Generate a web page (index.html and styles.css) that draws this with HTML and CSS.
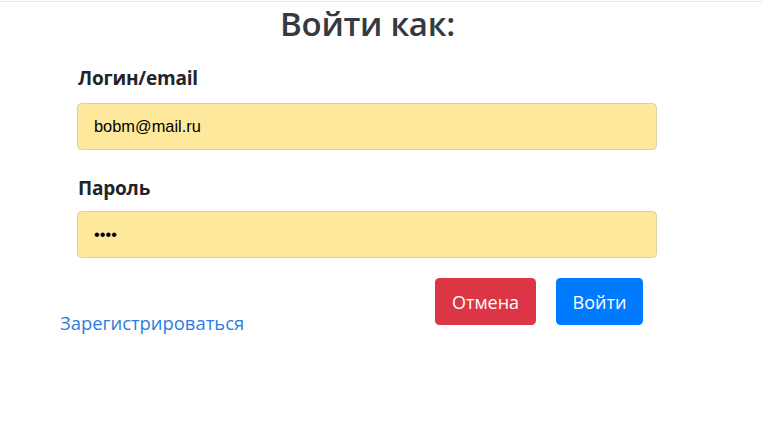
FILE: index.html
```html
<!DOCTYPE html>
<html lang="ru">
<head>
<meta charset="utf-8">
<title>Войти</title>
<link rel="stylesheet" href="styles.css">
</head>
<body>
<div class="topline"></div>
<main class="page">
  <h1 class="title">Войти как:</h1>
  <form class="form">
    <div class="group">
      <label class="label" for="login">Логин/email</label>
      <input class="field" id="login" type="text" value="bobm@mail.ru">
    </div>
    <div class="group group-next">
      <label class="label" for="pass">Пароль</label>
      <input class="field" id="pass" type="password" value="abcd">
    </div>
  </form>
  <div class="actions">
    <a class="link" href="#">Зарегистрироваться</a>
    <div class="buttons">
      <button class="btn btn-danger" type="button">Отмена</button>
      <button class="btn btn-primary" type="button">Войти</button>
    </div>
  </div>
</main>
</body>
</html>
```
FILE: styles.css
```css
* { box-sizing: border-box; }
html, body { margin: 0; padding: 0; background: #fff; }
body {
  font-family: "Open Sans", "Noto Sans", sans-serif;
  color: #212529;
  width: 762px;
  height: 433px;
  overflow: hidden;
}
.topline {
  margin-top: 1px;
  border-top: 1px solid #e6e6e6;
}
.page {
  width: 735px;
}
.title {
  margin: 0;
  text-align: center;
  font-weight: 600;
  font-size: 33px;
  line-height: 44px;
  color: #343a40;
  letter-spacing: -0.3px;
}
.form {
  margin: 0 0 0 77px;
  width: 580px;
}
.group {
  display: flex;
  flex-direction: column;
}
.label {
  font-weight: 700;
  font-size: 19px;
  line-height: 30px;
  padding: 17px 1px 10px;
  letter-spacing: -0.2px;
}
.group-next .label { padding-top: 23px; padding-bottom: 8px; }
.field {
  height: 47px;
  width: 100%;
  margin: 0;
  padding: 0 16px;
  border: 1px solid #d9d2a8;
  border-radius: 4.5px;
  background: #fee89b;
  font-family: "Liberation Sans", Arial, sans-serif;
  font-size: 16.4px;
  color: #000;
  outline: none;
}
.actions {
  display: flex;
  justify-content: space-between;
  align-items: flex-start;
  margin: 20px 0 0 60px;
  width: 583px;
}
.link {
  margin-top: 33px;
  font-size: 18.4px;
  line-height: 24px;
  color: #2a7de1;
  text-decoration: none;
}
.buttons {
  display: flex;
  gap: 20px;
}
.btn {
  height: 47px;
  border: none;
  border-radius: 4.5px;
  padding: 0 16px;
  font-family: "Open Sans", "Noto Sans", sans-serif;
  font-size: 18px;
  color: #fff;
}
.btn-danger { background: #dc3545; width: 101px; }
.btn-primary { background: #007bff; width: 87px; }
```
